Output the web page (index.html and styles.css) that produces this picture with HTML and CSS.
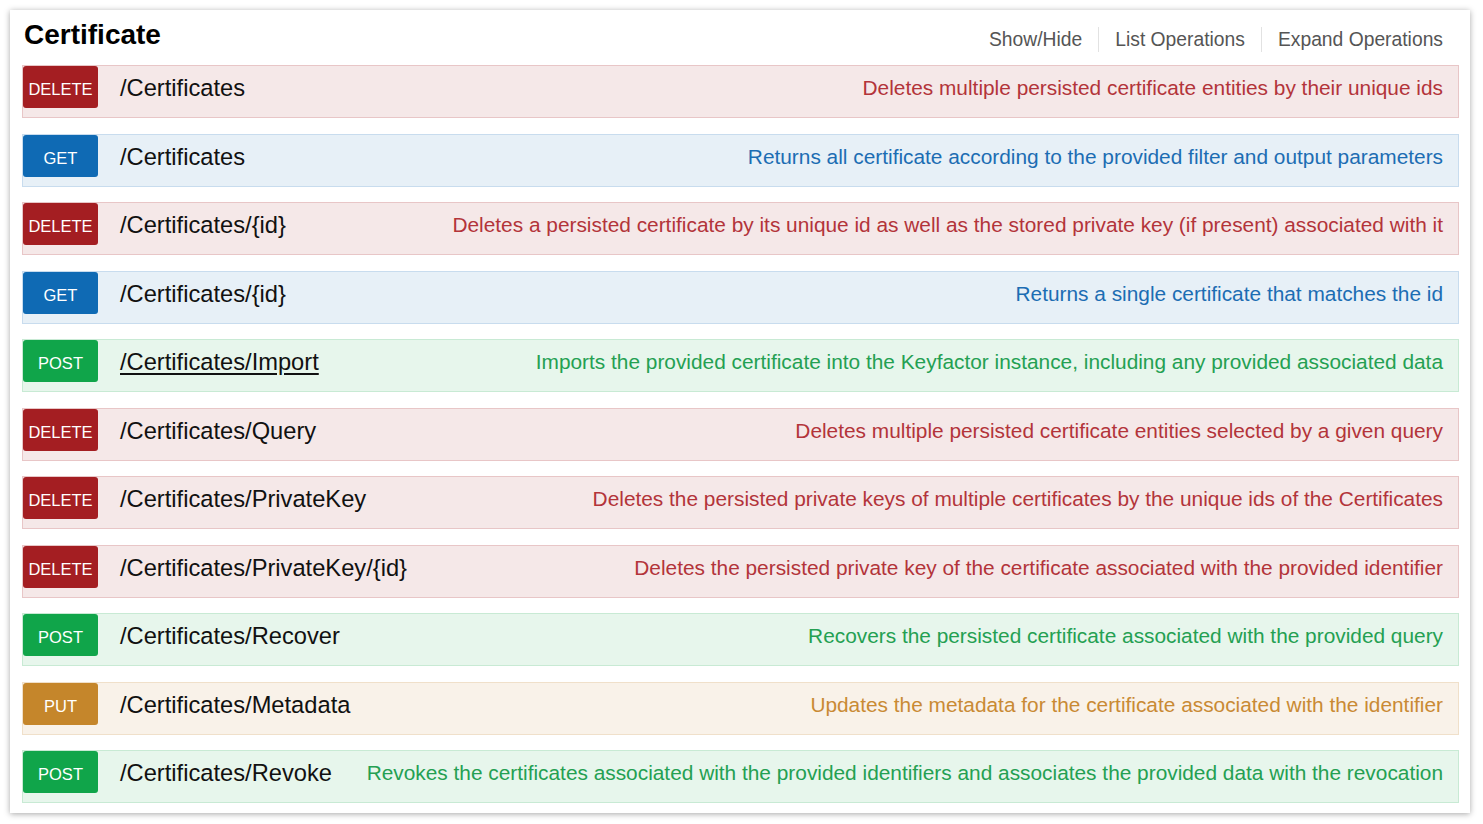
FILE: index.html
```html
<!DOCTYPE html>
<html>
<head>
<meta charset="utf-8">
<link rel="stylesheet" href="styles.css">
</head>
<body>
<div class="card">
  <div class="head">
    <h2 class="title">Certificate</h2>
    <ul class="links">
      <li>Show/Hide</li>
      <li>List Operations</li>
      <li>Expand Operations</li>
    </ul>
  </div>
  <div class="ops">
    <div class="op del"><span class="verb">DELETE</span><span class="path">/Certificates</span><span class="desc">Deletes multiple persisted certificate entities by their unique ids</span></div>
    <div class="op get"><span class="verb">GET</span><span class="path">/Certificates</span><span class="desc">Returns all certificate according to the provided filter and output parameters</span></div>
    <div class="op del"><span class="verb">DELETE</span><span class="path">/Certificates/{id}</span><span class="desc">Deletes a persisted certificate by its unique id as well as the stored private key (if present) associated with it</span></div>
    <div class="op get"><span class="verb">GET</span><span class="path">/Certificates/{id}</span><span class="desc">Returns a single certificate that matches the id</span></div>
    <div class="op post"><span class="verb">POST</span><span class="path hover">/Certificates/Import</span><span class="desc">Imports the provided certificate into the Keyfactor instance, including any provided associated data</span></div>
    <div class="op del"><span class="verb">DELETE</span><span class="path">/Certificates/Query</span><span class="desc">Deletes multiple persisted certificate entities selected by a given query</span></div>
    <div class="op del"><span class="verb">DELETE</span><span class="path">/Certificates/PrivateKey</span><span class="desc">Deletes the persisted private keys of multiple certificates by the unique ids of the Certificates</span></div>
    <div class="op del"><span class="verb">DELETE</span><span class="path">/Certificates/PrivateKey/{id}</span><span class="desc">Deletes the persisted private key of the certificate associated with the provided identifier</span></div>
    <div class="op post"><span class="verb">POST</span><span class="path">/Certificates/Recover</span><span class="desc">Recovers the persisted certificate associated with the provided query</span></div>
    <div class="op put"><span class="verb">PUT</span><span class="path">/Certificates/Metadata</span><span class="desc">Updates the metadata for the certificate associated with the identifier</span></div>
    <div class="op post"><span class="verb">POST</span><span class="path">/Certificates/Revoke</span><span class="desc">Revokes the certificates associated with the provided identifiers and associates the provided data with the revocation</span></div>
  </div>
</div>
</body>
</html>
```

FILE: styles.css
```css
html, body {
  margin: 0;
  padding: 0;
  background: #ffffff;
}
body {
  padding: 10px 13px 10px 10px;
  font-family: "Liberation Sans", Arial, sans-serif;
}
.card {
  width: 1460px;
  box-sizing: border-box;
  background: #fff;
  box-shadow: 0 1px 6px rgba(0, 0, 0, 0.35);
  padding: 0 11px 10px 12px;
}
.head {
  height: 55px;
  display: flex;
  align-items: flex-start;
  justify-content: space-between;
}
.title {
  margin: 9px 0 0 2px;
  font-size: 28px;
  font-weight: bold;
  color: #000;
  line-height: 32px;
}
.links {
  list-style: none;
  margin: 17px 0 0 0;
  padding: 0;
  display: flex;
  font-size: 19.3px;
  color: #555;
}
.links li {
  padding: 1px 16px;
  line-height: 23px;
  border-left: 1px solid #e2e2e2;
}
.links li:first-child {
  border-left: none;
}
.ops {
  display: flex;
  flex-direction: column;
  gap: 15.5px;
}
.op {
  height: 53px;
  box-sizing: border-box;
  border: 1px solid;
  display: flex;
  align-items: flex-start;
  padding: 0 15px 0 0;
}
.verb {
  width: 75px;
  height: 42px;
  flex: none;
  border-radius: 3px;
  color: #fff;
  font-size: 16.5px;
  display: flex;
  align-items: center;
  justify-content: center;
  padding-top: 5px;
  box-sizing: border-box;
}
.path {
  margin-left: 22px;
  font-size: 23.7px;
  line-height: 42px;
  padding-top: 1px;
  color: #111;
  white-space: nowrap;
}
.path.hover {
  text-decoration: underline;
  text-underline-offset: 3px;
}
.desc {
  margin-left: auto;
  font-size: 20.85px;
  line-height: 42px;
  padding-top: 1px;
  white-space: nowrap;
}
.del { background: #f5e8e8; border-color: #e8c6c7; }
.del .verb { background: #a41e22; }
.del .desc { color: #b3343a; }
.get { background: #e7f0f7; border-color: #c8dcee; }
.get .verb { background: #0f6ab4; }
.get .desc { color: #1c6db3; }
.post { background: #e7f6ec; border-color: #c8ead4; }
.post .verb { background: #10a54a; }
.post .desc { color: #24a052; }
.put { background: #f9f2e9; border-color: #f0e0ca; }
.put .verb { background: #c5862b; }
.put .desc { color: #c98a34; }
```
